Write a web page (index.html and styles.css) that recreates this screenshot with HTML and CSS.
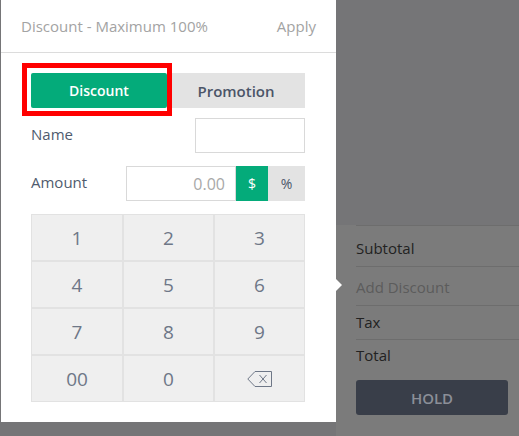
FILE: index.html
```html
<!DOCTYPE html>
<html lang="en">
<head>
  <meta charset="UTF-8" />
  <title>Discount</title>
  <link rel="stylesheet" href="styles.css">
</head>
<body>
  <div class="screen">
    <div class="popover">
      <div class="pop-head">
        <span class="pop-title">Discount - Maximum 100%</span>
        <span class="pop-apply">Apply</span>
      </div>
      <div class="pop-body">
        <div class="tabs">
          <button class="tab active">Discount</button>
          <button class="tab">Promotion</button>
          <div class="highlight"></div>
        </div>
        <div class="field">
          <label>Name</label>
          <input type="text" class="name-input">
        </div>
        <div class="field">
          <label>Amount</label>
          <div class="amount">
            <input type="text" placeholder="0.00">
            <button class="unit active">$</button>
            <button class="unit">%</button>
          </div>
        </div>
        <div class="keypad">
          <button>1</button>
          <button>2</button>
          <button>3</button>
          <button>4</button>
          <button>5</button>
          <button>6</button>
          <button>7</button>
          <button>8</button>
          <button>9</button>
          <button>00</button>
          <button>0</button>
          <button class="back">
            <svg width="25" height="16" viewBox="0 0 25 16">
              <path d="M8 0.5 H24.5 V15.5 H8 L0.8 8 Z" fill="none" stroke="#6e7787" stroke-width="1"/>
              <path d="M12.5 4 L19.5 12 M19.5 4 L12.5 12" stroke="#6e7787" stroke-width="1"/>
            </svg>
          </button>
        </div>
      </div>
      <span class="pop-arrow"></span>
    </div>

    <div class="summary">
      <div class="summary-list">
        <div class="row row-sub">Subtotal</div>
        <div class="row row-disc">Add Discount</div>
        <div class="row row-tax">Tax</div>
        <div class="row row-total">Total</div>
        <button class="hold">HOLD</button>
      </div>
    </div>
  </div>
</body>
</html>
```

FILE: styles.css
```css
* {
  margin: 0;
  padding: 0;
  box-sizing: border-box;
}

body {
  font-family: 'Open Sans', 'Liberation Sans', sans-serif;
  background: #757577;
  width: 519px;
  height: 436px;
  overflow: hidden;
}

.screen {
  display: flex;
  height: 436px;
}

button {
  font-family: inherit;
  border: none;
  cursor: pointer;
}

/* popover */

.popover {
  position: relative;
  width: 335px;
  height: 422px;
  margin-left: 1px;
  background: #fff;
  flex-shrink: 0;
  z-index: 2;
}

.pop-head {
  height: 53px;
  border-bottom: 1px solid #dcdcdc;
  display: flex;
  justify-content: space-between;
  align-items: center;
  padding: 0 20px 0 20px;
  font-size: 15px;
  color: #a3a3a3;
}

.pop-body {
  padding: 20px 31px 0 30px;
}

.tabs {
  position: relative;
  display: flex;
  height: 35px;
}

.tab {
  height: 35px;
  font-size: 15px;
  font-weight: 600;
  background: #e3e3e3;
  color: #4b5568;
  flex: 138;
}

.tab.active {
  flex: 136;
  font-size: 14px;
  background: #04ab7a;
  color: #fff;
  border-radius: 2px;
}

.highlight {
  position: absolute;
  left: -9px;
  top: -10px;
  width: 150px;
  height: 53px;
  border: 5px solid #ff0000;
  pointer-events: none;
}

.field {
  display: flex;
  justify-content: space-between;
  align-items: center;
  height: 35px;
  margin-top: 10px;
}

.field + .field {
  margin-top: 13px;
}

.field label {
  font-size: 15px;
  color: #4f5b6e;
  padding-bottom: 3px;
}

.field input {
  height: 35px;
  border: 1px solid #d9d9d9;
  font-family: inherit;
  outline: none;
}

.name-input {
  width: 110px;
}

.amount {
  display: flex;
}

.amount input {
  width: 110px;
  text-align: right;
  padding-right: 10px;
  font-size: 16px;
}

.amount input::placeholder {
  color: #a8a8a8;
}

.unit {
  height: 35px;
  width: 37px;
  font-size: 14px;
  background: #e3e3e3;
  color: #4b5568;
}

.unit.active {
  width: 32px;
  background: #04ab7a;
  color: #fff;
}

.keypad {
  margin-top: 13px;
  display: grid;
  grid-template-columns: 90px 1fr 1fr;
  grid-auto-rows: 45px;
  gap: 2px;
  padding: 1px;
  background: #e2e2e2;
}

.keypad button {
  background: #efefef;
  font-size: 19px;
  color: #6e7787;
  display: flex;
  align-items: center;
  justify-content: center;
}

.pop-arrow {
  position: absolute;
  right: -6px;
  top: 279px;
  width: 0;
  height: 0;
  border-top: 6px solid transparent;
  border-bottom: 6px solid transparent;
  border-left: 6px solid #fff;
}

/* summary panel behind the overlay */

.summary {
  flex: 1;
  padding-top: 225px;
}

.summary-list {
  background: #7b7b7b;
  height: 211px;
  padding-left: 20px;
}

.row {
  border-top: 1px solid #6d6d6d;
  font-size: 15px;
  line-height: 24px;
  color: #222;
}

.row-sub {
  height: 41px;
  padding-top: 10px;
}

.row-disc {
  height: 39px;
  padding-top: 8px;
  color: #5c5c5c;
}

.row-tax {
  height: 34px;
  padding-top: 4px;
}

.row-total {
  height: 34px;
  padding-top: 3px;
}

.hold {
  display: block;
  margin-top: 7px;
  width: 152px;
  height: 35px;
  border-radius: 3px;
  background: #393e49;
  color: #8b8f98;
  font-size: 15px;
  font-weight: 600;
}
```
